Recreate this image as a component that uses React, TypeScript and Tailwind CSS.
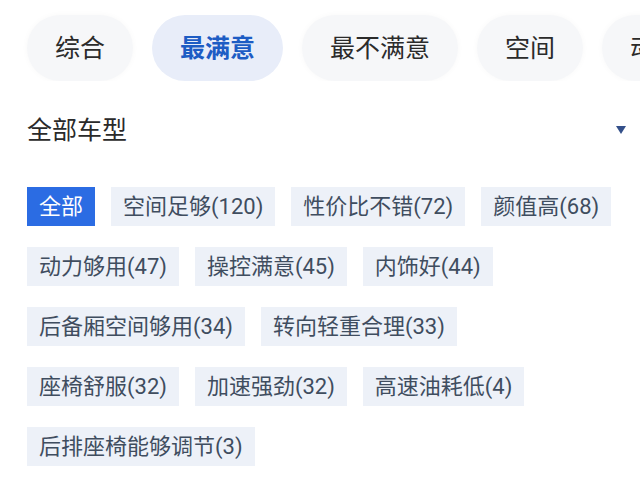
import React, { useState } from 'react';

const tabs = ['综合', '最满意', '最不满意', '空间', '动力'];

const tags = [
  '全部',
  '空间足够(120)',
  '性价比不错(72)',
  '颜值高(68)',
  '动力够用(47)',
  '操控满意(45)',
  '内饰好(44)',
  '后备厢空间够用(34)',
  '转向轻重合理(33)',
  '座椅舒服(32)',
  '加速强劲(32)',
  '高速油耗低(4)',
  '后排座椅能够调节(3)',
];

const App: React.FC = () => {
  const [tab, setTab] = useState(1);
  const [tag, setTag] = useState(0);

  return (
    <div
      className="w-[640px] h-[485px] overflow-hidden bg-white"
      style={{ fontFamily: 'Roboto, "Noto Sans CJK SC", sans-serif' }}
    >
      {/* 顶部标签 */}
      <div className="flex gap-[19px] pl-[27px] pt-[15px] overflow-hidden whitespace-nowrap">
        {tabs.map((t, i) => (
          <button
            key={t}
            onClick={() => setTab(i)}
            className={
              i === tab
                ? 'shrink-0 h-[66px] px-[28px] rounded-full bg-[#e8edf9] text-[#1d5cc4] text-[25px] font-bold leading-none'
                : 'shrink-0 h-[66px] px-[28px] rounded-full bg-[#f6f7f9] text-[#2b2b2b] text-[25px] leading-none shadow-[0_0_6px_rgba(0,0,0,0.03)]'
            }
          >
            {t}
          </button>
        ))}
      </div>

      {/* 车型选择 */}
      <div className="mt-[29px] h-[40px] flex items-center justify-between pl-[27px] pr-[14px]">
        <span className="text-[25px] text-[#2a2a2a] leading-none">全部车型</span>
        <svg width="10" height="8" viewBox="0 0 10 8">
          <path d="M0 0 L10 0 L5 8 Z" fill="#34508a" />
        </svg>
      </div>

      {/* 口碑标签 */}
      <div className="mt-[37px] pl-[27px] pr-[27px] flex flex-wrap gap-x-[16px] gap-y-[21px]">
        {tags.map((t, i) => (
          <button
            key={t}
            onClick={() => setTag(i)}
            className={
              i === tag
                ? 'h-[39px] px-[12px] flex items-center bg-[#2b6ce3] text-white text-[22px] leading-none whitespace-nowrap'
                : 'h-[39px] px-[12px] flex items-center bg-[#edf1f8] text-[#3f4d5f] text-[22px] leading-none whitespace-nowrap'
            }
          >
            {t}
          </button>
        ))}
      </div>
    </div>
  );
};

export default App;
